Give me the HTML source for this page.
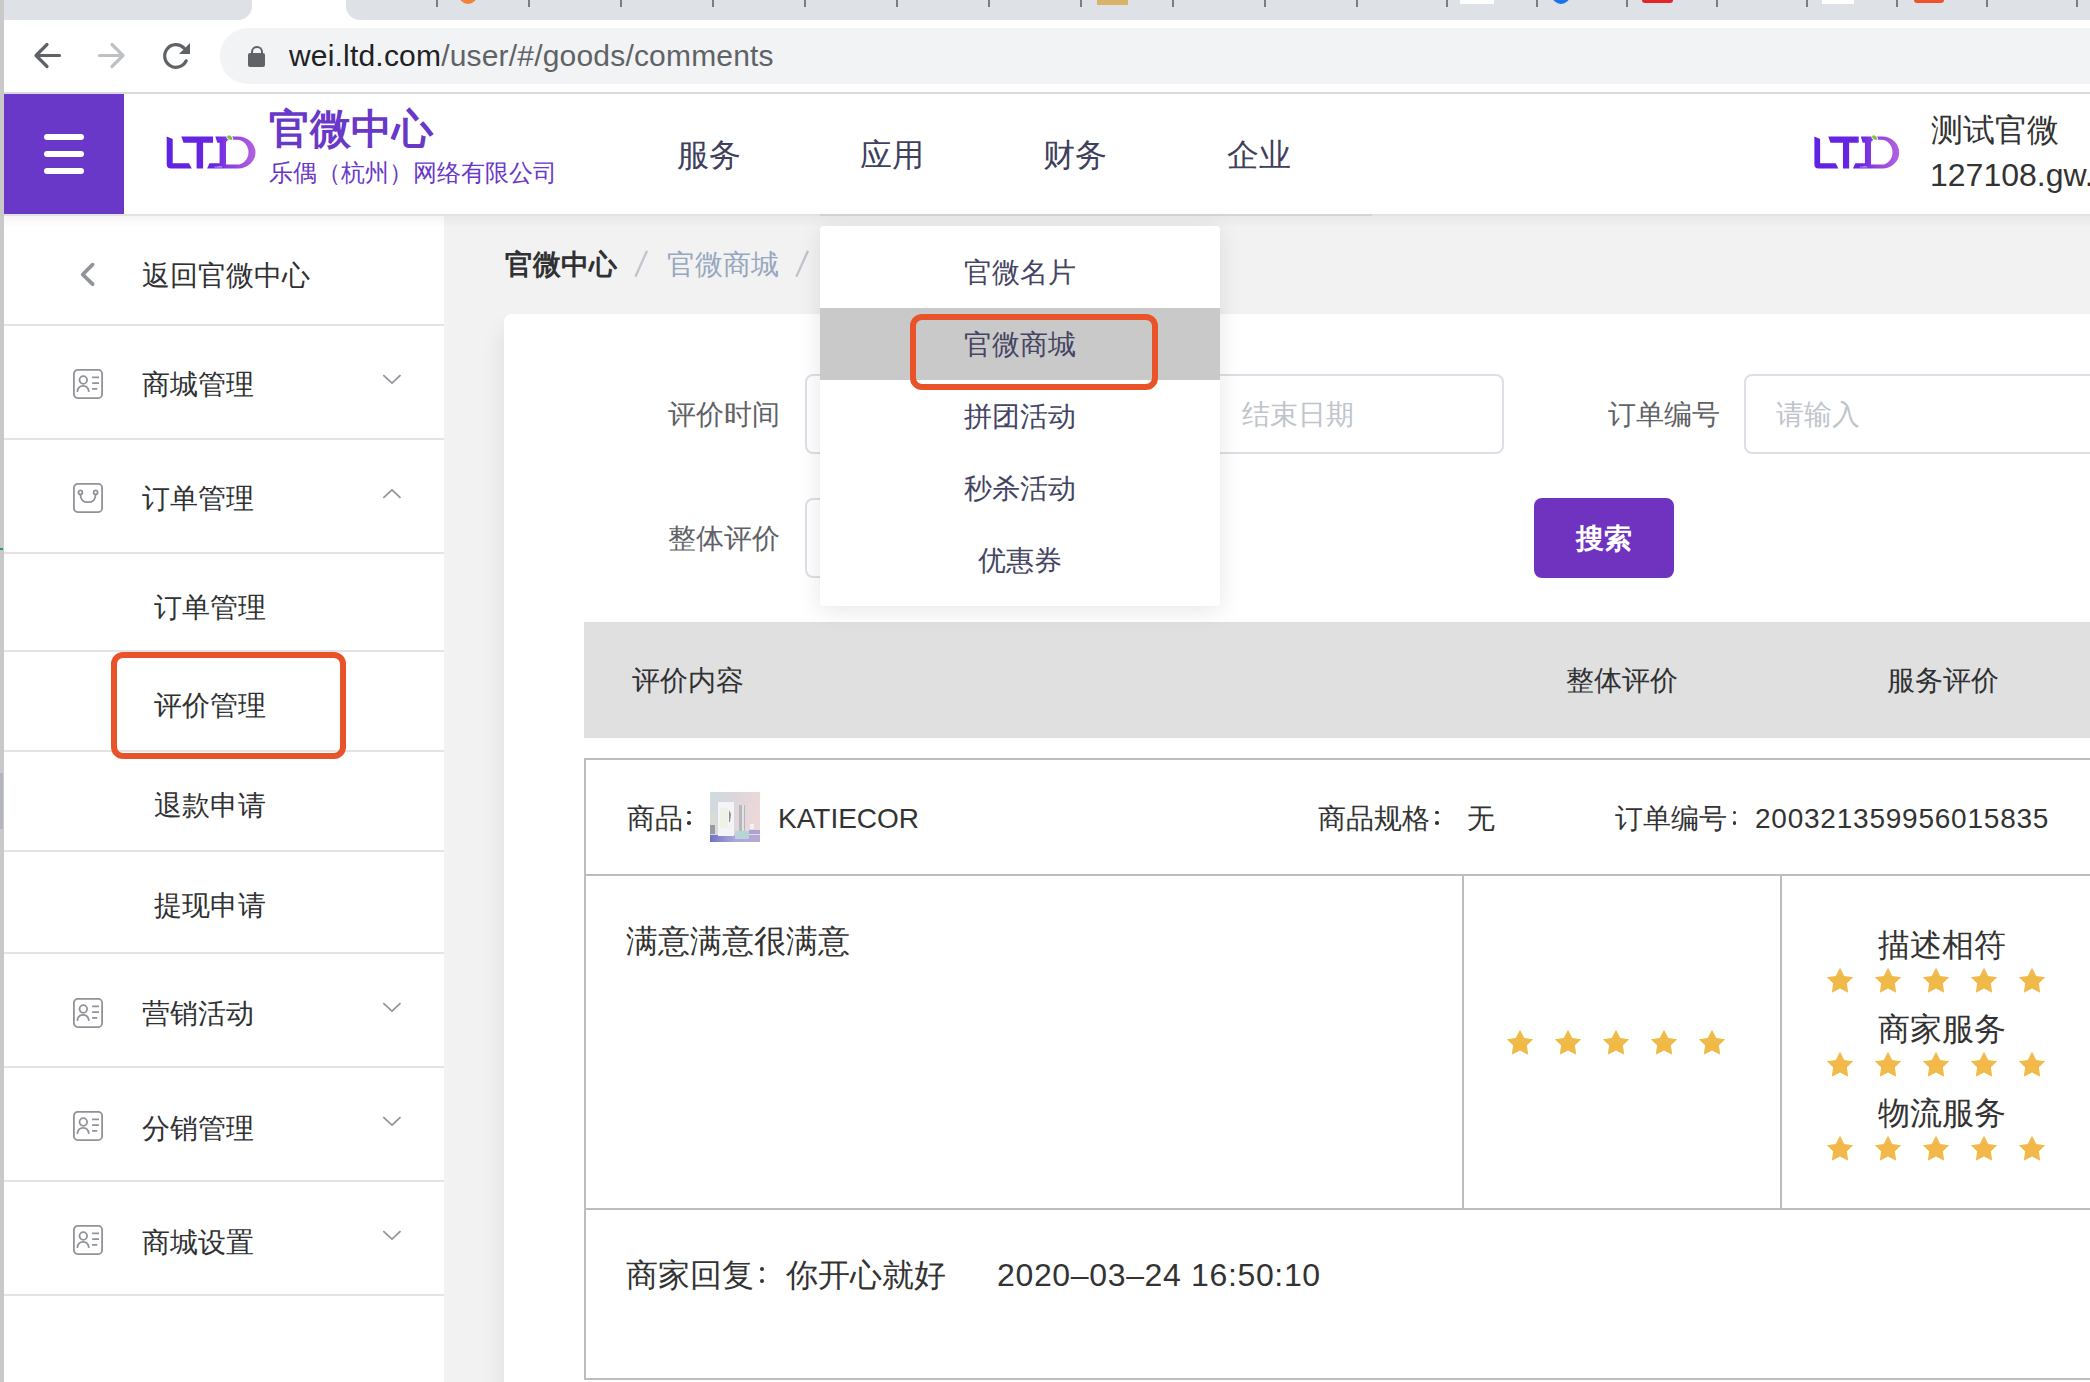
<!DOCTYPE html>
<html><head><meta charset="utf-8">
<style>
*{box-sizing:border-box;margin:0;padding:0}
html,body{width:2090px;height:1382px;overflow:hidden;background:#f2f2f2;font-family:"Liberation Sans",sans-serif;color:#303133}
.a{position:absolute}
.t{position:absolute;white-space:nowrap;line-height:40px}
.sep{position:absolute;top:0;width:2px;height:7px;background:#7a7c80}
.div{position:absolute;left:4px;width:440px;height:2px;background:#e3e3e3}
.ico{position:absolute;left:73px;width:30px;height:30px}
.chev{position:absolute;left:382px;width:20px;height:12px}
.star{position:absolute;width:28px;height:27px}
</style></head><body>

<!-- tab strip -->
<div class="a" style="left:0;top:0;width:2090px;height:20px;background:#dee1e6"></div>
<div class="a" style="left:236px;top:0;width:126px;height:20px;background:#fff"></div>
<div class="a" style="left:220px;top:0;width:32px;height:20px;background:#dee1e6;border-bottom-right-radius:14px"></div>
<div class="a" style="left:346px;top:0;width:32px;height:20px;background:#dee1e6;border-bottom-left-radius:14px"></div>

<!-- toolbar -->
<div class="a" style="left:0;top:20px;width:2090px;height:72px;background:#fff"></div>
<div class="a" style="left:0;top:92px;width:2090px;height:2px;background:#d9dadd"></div>
<div class="a" style="left:220px;top:28px;width:1900px;height:56px;border-radius:28px;background:#f1f3f4"></div>


<!-- tab separators / favicons -->
<div class="sep" style="left:436px"></div><div class="sep" style="left:528px"></div><div class="sep" style="left:620px"></div><div class="sep" style="left:712px"></div><div class="sep" style="left:804px"></div><div class="sep" style="left:896px"></div><div class="sep" style="left:988px"></div><div class="sep" style="left:1080px"></div><div class="sep" style="left:1172px"></div><div class="sep" style="left:1264px"></div><div class="sep" style="left:1356px"></div><div class="sep" style="left:1446px"></div><div class="sep" style="left:1536px"></div><div class="sep" style="left:1626px"></div><div class="sep" style="left:1716px"></div><div class="sep" style="left:1806px"></div><div class="sep" style="left:1896px"></div><div class="sep" style="left:1986px"></div><div class="sep" style="left:2076px"></div>
<div class="a" style="left:459px;top:-14px;width:18px;height:18px;border-radius:50%;background:#f0823a"></div>
<div class="a" style="left:1097px;top:0;width:31px;height:5px;background:#d7b46a"></div>
<div class="a" style="left:1460px;top:0;width:34px;height:4px;background:#fff"></div>
<div class="a" style="left:1552px;top:-14px;width:18px;height:18px;border-radius:50%;background:#1a73e8"></div>
<div class="a" style="left:1642px;top:-4px;width:31px;height:7px;border-radius:3px;background:#e3262b"></div>
<div class="a" style="left:1822px;top:0;width:32px;height:4px;background:#fff"></div>
<div class="a" style="left:1914px;top:-4px;width:30px;height:7px;border-radius:3px;background:#f0522a"></div>
<!-- nav icons -->
<svg class="a" style="left:0;top:20px" width="220" height="72" viewBox="0 20 220 72">
<g fill="none" stroke-width="3.2" stroke-linecap="round" stroke-linejoin="round">
<path d="M59.5 55.5H36.5M47 44.5L36 55.5L47 66.5" stroke="#5f6368"/>
<path d="M99.5 55.5H122.5M112 44.5L123 55.5L112 66.5" stroke="#bdc1c6"/>
<path d="M186.2 60.8A11.3 11.3 0 1 1 184 48" stroke="#5f6368"/>
</g>
<path d="M190 43V54H179Z" fill="#5f6368"/>
</svg>
<!-- lock -->
<div class="a" style="left:251px;top:46px;width:12px;height:14px;border:2.6px solid #5f6368;border-bottom:none;border-radius:7px 7px 0 0"></div>
<div class="a" style="left:248px;top:53px;width:17px;height:14px;border-radius:2px;background:#5f6368"></div>
<div class="t" style="left:289px;top:36px;font-size:30px;color:#202124;letter-spacing:0.19px">wei.ltd.com<span style="color:#5f6368">/user/#/goods/comments</span></div>

<!-- app header -->
<div class="a" style="left:0;top:94px;width:2090px;height:120px;background:#fff"></div>
<div class="a" style="left:4px;top:94px;width:120px;height:120px;background:#6a38c8"></div>


<!-- hamburger -->
<div class="a" style="left:44px;top:134px;width:40px;height:6px;border-radius:3px;background:#fff"></div>
<div class="a" style="left:44px;top:151px;width:40px;height:6px;border-radius:3px;background:#fff"></div>
<div class="a" style="left:44px;top:168px;width:40px;height:6px;border-radius:3px;background:#fff"></div>
<!-- logo -->
<svg class="a" style="left:160px;top:125px" width="100" height="50" viewBox="0 0 100 50"><defs><linearGradient id="lg" gradientUnits="userSpaceOnUse" x1="6" x2="96" y1="0" y2="0"><stop offset="0" stop-color="#5f22e2"/><stop offset="0.55" stop-color="#6a26e0"/><stop offset="0.7" stop-color="#8a3ee0"/><stop offset="1" stop-color="#b562e0"/></linearGradient></defs>
<g fill="url(#lg)" fill-rule="evenodd">
<path d="M6.7 11.5L12.7 14V38.3H29L31.8 43.5H11Q6.7 43.5 6.7 39Z"/>
<path d="M21.3 11.5H53.1V17.7H43.1V43.5H36.6V17.7H23.5Z"/>
<path d="M55.3 11.5H78A17.5 16 0 0 1 95.5 27.5A17.5 16 0 0 1 78 43.5H47.1L49.5 38.3H59.6V17.7H57.3ZM66 18Q66 14.8 71 14.8H77A11.5 12.35 0 0 1 88.5 27.15A11.5 12.35 0 0 1 77 39.5H66Z"/>
</g>
<ellipse cx="69.8" cy="12.8" rx="3.7" ry="2.4" transform="rotate(35 69.8 12.8)" fill="#fff"/><ellipse cx="69.8" cy="12.6" rx="3" ry="1.8" transform="rotate(35 69.8 12.6)" fill="#7cc242"/><text x="54.5" y="42.6" font-size="4" fill="#fff" opacity="0.7" font-family="Liberation Sans">com</text></svg>
<div class="t" style="left:269px;top:109px;font-size:41px;line-height:41px;font-weight:bold;color:#6a38c8">官微中心</div>
<div class="t" style="left:269px;top:161px;font-size:24px;line-height:24px;color:#6a38c8">乐偶（杭州）网络有限公司</div>
<!-- nav -->
<div class="t" style="left:677px;top:135px;font-size:32px;line-height:40px;color:#3f3f5e">服务</div>
<div class="t" style="left:860px;top:135px;font-size:32px;line-height:40px;color:#3f3f5e">应用</div>
<div class="t" style="left:1043px;top:135px;font-size:32px;line-height:40px;color:#3f3f5e">财务</div>
<div class="t" style="left:1227px;top:135px;font-size:32px;line-height:40px;color:#3f3f5e">企业</div>
<!-- user -->
<svg class="a" style="left:1808px;top:125px;transform:scaleX(0.955);transform-origin:0 0" width="100" height="50" viewBox="0 0 100 50"><defs><linearGradient id="lg2" gradientUnits="userSpaceOnUse" x1="6" x2="96" y1="0" y2="0"><stop offset="0" stop-color="#5f22e2"/><stop offset="0.55" stop-color="#6a26e0"/><stop offset="0.7" stop-color="#8a3ee0"/><stop offset="1" stop-color="#b562e0"/></linearGradient></defs>
<g fill="url(#lg2)" fill-rule="evenodd">
<path d="M6.7 11.5L12.7 14V38.3H29L31.8 43.5H11Q6.7 43.5 6.7 39Z"/>
<path d="M21.3 11.5H53.1V17.7H43.1V43.5H36.6V17.7H23.5Z"/>
<path d="M55.3 11.5H78A17.5 16 0 0 1 95.5 27.5A17.5 16 0 0 1 78 43.5H47.1L49.5 38.3H59.6V17.7H57.3ZM66 18Q66 14.8 71 14.8H77A11.5 12.35 0 0 1 88.5 27.15A11.5 12.35 0 0 1 77 39.5H66Z"/>
</g>
<ellipse cx="69.8" cy="12.8" rx="3.7" ry="2.4" transform="rotate(35 69.8 12.8)" fill="#fff"/><ellipse cx="69.8" cy="12.6" rx="3" ry="1.8" transform="rotate(35 69.8 12.6)" fill="#7cc242"/><text x="54.5" y="42.6" font-size="4" fill="#fff" opacity="0.7" font-family="Liberation Sans">com</text></svg>
<div class="t" style="left:1931px;top:110px;font-size:32px;line-height:40px;color:#333">测试官微</div>
<div class="t" style="left:1930px;top:155px;font-size:32px;line-height:40px;color:#333">127108.gw.ltd.com</div>

<!-- sidebar -->
<div class="a" style="left:4px;top:214px;width:440px;height:1168px;background:#fff"></div>

<div class="div" style="top:324px"></div>
<div class="div" style="top:438px"></div>
<div class="div" style="top:552px"></div>
<div class="div" style="top:650px"></div>
<div class="div" style="top:750px"></div>
<div class="div" style="top:850px"></div>
<div class="div" style="top:952px"></div>
<div class="div" style="top:1066px"></div>
<div class="div" style="top:1180px"></div>
<div class="div" style="top:1294px"></div>
<svg class="a" style="left:76px;top:258px" width="24" height="34" viewBox="0 0 24 34"><path d="M16.6 6.7L6.7 16.5L16.6 26.2" fill="none" stroke="#909399" stroke-width="3.8" stroke-linecap="round" stroke-linejoin="round"/></svg>
<div class="t" style="left:142px;top:256px;font-size:28px;color:#303133;">返回官微中心</div>
<svg class="a" style="left:73px;top:369px" width="30" height="30" viewBox="0 0 30 30"><g fill="none" stroke="#909399" stroke-width="1.8"><rect x="0.9" y="0.9" width="28.2" height="28.2" rx="3.8"/><circle cx="10.3" cy="11" r="3.8"/><path d="M4.3 22.8Q5 16.8 10.1 16.8Q15.2 16.8 15.9 22.8"/><path d="M19.1 8.3H26M19.1 14.1H26M19.1 19.9H24.2" stroke-width="1.7"/></g></svg>
<div class="t" style="left:142px;top:365px;font-size:28px;color:#303133;">商城管理</div>
<svg class="a" style="left:380px;top:374px" width="24" height="14" viewBox="0 0 24 14"><path d="M3.3 1.2L12 9.2L20.5 1.2" fill="none" stroke="#909399" stroke-width="1.7"/></svg>
<svg class="a" style="left:73px;top:483px" width="30" height="30" viewBox="0 0 30 30"><g fill="none" stroke="#909399" stroke-width="1.8"><rect x="0.9" y="0.9" width="28.2" height="28.2" rx="3.8"/><circle cx="7.4" cy="9.4" r="2"/><circle cx="22.6" cy="9.4" r="2"/><path d="M7.4 11.4Q7.6 19.2 15 19.2Q22.4 19.2 22.6 11.4"/></g></svg>
<div class="t" style="left:142px;top:479px;font-size:28px;color:#303133;">订单管理</div>
<svg class="a" style="left:380px;top:488px" width="24" height="14" viewBox="0 0 24 14"><path d="M3.3 9.8L12 1.8L20.5 9.8" fill="none" stroke="#909399" stroke-width="1.7"/></svg>
<svg class="a" style="left:73px;top:998px" width="30" height="30" viewBox="0 0 30 30"><g fill="none" stroke="#909399" stroke-width="1.8"><rect x="0.9" y="0.9" width="28.2" height="28.2" rx="3.8"/><circle cx="10.3" cy="11" r="3.8"/><path d="M4.3 22.8Q5 16.8 10.1 16.8Q15.2 16.8 15.9 22.8"/><path d="M19.1 8.3H26M19.1 14.1H26M19.1 19.9H24.2" stroke-width="1.7"/></g></svg>
<div class="t" style="left:142px;top:994px;font-size:28px;color:#303133;">营销活动</div>
<svg class="a" style="left:380px;top:1002px" width="24" height="14" viewBox="0 0 24 14"><path d="M3.3 1.2L12 9.2L20.5 1.2" fill="none" stroke="#909399" stroke-width="1.7"/></svg>
<svg class="a" style="left:73px;top:1111px" width="30" height="30" viewBox="0 0 30 30"><g fill="none" stroke="#909399" stroke-width="1.8"><rect x="0.9" y="0.9" width="28.2" height="28.2" rx="3.8"/><circle cx="10.3" cy="11" r="3.8"/><path d="M4.3 22.8Q5 16.8 10.1 16.8Q15.2 16.8 15.9 22.8"/><path d="M19.1 8.3H26M19.1 14.1H26M19.1 19.9H24.2" stroke-width="1.7"/></g></svg>
<div class="t" style="left:142px;top:1109px;font-size:28px;color:#303133;">分销管理</div>
<svg class="a" style="left:380px;top:1116px" width="24" height="14" viewBox="0 0 24 14"><path d="M3.3 1.2L12 9.2L20.5 1.2" fill="none" stroke="#909399" stroke-width="1.7"/></svg>
<svg class="a" style="left:73px;top:1225px" width="30" height="30" viewBox="0 0 30 30"><g fill="none" stroke="#909399" stroke-width="1.8"><rect x="0.9" y="0.9" width="28.2" height="28.2" rx="3.8"/><circle cx="10.3" cy="11" r="3.8"/><path d="M4.3 22.8Q5 16.8 10.1 16.8Q15.2 16.8 15.9 22.8"/><path d="M19.1 8.3H26M19.1 14.1H26M19.1 19.9H24.2" stroke-width="1.7"/></g></svg>
<div class="t" style="left:142px;top:1223px;font-size:28px;color:#303133;">商城设置</div>
<svg class="a" style="left:380px;top:1230px" width="24" height="14" viewBox="0 0 24 14"><path d="M3.3 1.2L12 9.2L20.5 1.2" fill="none" stroke="#909399" stroke-width="1.7"/></svg>
<div class="t" style="left:154px;top:588px;font-size:28px;color:#303133;">订单管理</div>
<div class="t" style="left:154px;top:686px;font-size:28px;color:#303133;">评价管理</div>
<div class="t" style="left:154px;top:786px;font-size:28px;color:#303133;">退款申请</div>
<div class="t" style="left:154px;top:886px;font-size:28px;color:#303133;">提现申请</div>
<div class="a" style="left:110.5px;top:652px;width:235px;height:106.5px;border:6px solid #e8532a;border-radius:12px"></div>
<!-- header bottom line -->
<div class="a" style="left:4px;top:214px;width:2086px;height:2px;background:#e2e2e4"></div>
<div class="a" style="left:820px;top:214px;width:552px;height:2px;background:#d4d4d6"></div>
<div class="a" style="left:4px;top:216px;width:2086px;height:12px;background:linear-gradient(rgba(0,0,0,0.04),rgba(0,0,0,0))"></div>

<!-- left window border -->
<div class="a" style="left:0;top:0;width:4px;height:1382px;background:#c9c9c9"></div>
<div class="a" style="left:0;top:548px;width:3px;height:2px;background:#2a9a6a"></div>
<div class="a" style="left:0;top:773px;width:3px;height:56px;background:#b3b6c0"></div>

<div class="t" style="left:505px;top:245px;font-size:28px;color:#303133;font-weight:bold">官微中心</div>
<svg class="a" style="left:620px;top:240px" width="200" height="50"><path d="M15.4 36.8L27 10.8M176.3 36.8L188 10.8" stroke="#c0c4cc" stroke-width="2.3"/></svg>
<div class="t" style="left:667px;top:245px;font-size:28px;color:#97a8be;">官微商城</div>

<!-- card -->
<div class="a" style="left:504px;top:314px;width:1700px;height:1200px;background:#fff;border-radius:8px;box-shadow:-3px 14px 22px rgba(0,0,0,0.075)"></div>
<div class="t" style="left:668px;top:395px;font-size:28px;color:#606266;">评价时间</div>
<div class="a" style="left:805px;top:374px;width:699px;height:80px;border:2px solid #dcdfe6;border-radius:8px"></div>
<div class="t" style="left:1242px;top:395px;font-size:28px;color:#c0c4cc;">结束日期</div>
<div class="t" style="left:1608px;top:395px;font-size:28px;color:#606266;">订单编号</div>
<div class="a" style="left:1744px;top:374px;width:500px;height:80px;border:2px solid #dcdfe6;border-radius:8px"></div>
<div class="t" style="left:1776px;top:395px;font-size:28px;color:#c0c4cc;">请输入</div>
<div class="t" style="left:668px;top:519px;font-size:28px;color:#606266;">整体评价</div>
<div class="a" style="left:805px;top:498px;width:400px;height:80px;border:2px solid #dcdfe6;border-radius:8px"></div>
<div class="a" style="left:1534px;top:498px;width:140px;height:80px;border-radius:8px;background:#7033bf"></div>
<div class="t" style="left:1576px;top:519px;font-size:28px;color:#fff;font-weight:bold">搜索</div>
<div class="a" style="left:584px;top:622px;width:1506px;height:116px;background:#e0e0e0"></div>
<div class="t" style="left:632px;top:661px;font-size:28px;color:#303133;">评价内容</div>
<div class="t" style="left:1566px;top:661px;font-size:28px;color:#303133;">整体评价</div>
<div class="t" style="left:1887px;top:661px;font-size:28px;color:#303133;">服务评价</div>
<div class="a" style="left:584px;top:758px;width:1600px;height:622px;border:2px solid #bdbdbd"></div>
<div class="a" style="left:584px;top:874px;width:1506px;height:2px;background:#bdbdbd"></div>
<div class="a" style="left:584px;top:1208px;width:1506px;height:2px;background:#bdbdbd"></div>
<div class="a" style="left:1462px;top:876px;width:2px;height:332px;background:#bdbdbd"></div>
<div class="a" style="left:1780px;top:876px;width:2px;height:332px;background:#bdbdbd"></div>
<div class="t" style="left:627px;top:799px;font-size:28px;color:#333;">商品</div><div class="a" style="left:687.0px;top:810.8000000000001px;width:3.6px;height:3.6px;border-radius:50%;background:#333"></div><div class="a" style="left:687.0px;top:821.1px;width:3.6px;height:3.6px;border-radius:50%;background:#333"></div>
<svg class="a" style="left:710px;top:792px" width="50" height="50" viewBox="0 0 50 50">
<defs><linearGradient id="pbg" x1="0" y1="0" x2="1" y2="0.3"><stop offset="0" stop-color="#cddbe2"/><stop offset="0.45" stop-color="#dcd6da"/><stop offset="1" stop-color="#ecd8d8"/></linearGradient>
<linearGradient id="pfl" x1="0" y1="0" x2="1" y2="0"><stop offset="0" stop-color="#6f73c0"/><stop offset="0.5" stop-color="#a9a8dc"/><stop offset="1" stop-color="#b9a8d6"/></linearGradient></defs>
<rect width="50" height="50" fill="url(#pbg)"/>
<rect x="0" y="20" width="7" height="20" fill="#d9dfcf" opacity="0.6"/>
<rect x="0" y="43" width="50" height="7" fill="url(#pfl)"/>
<rect x="0" y="33" width="5" height="9" fill="#9a9aa6"/>
<rect x="8" y="10" width="16" height="34" fill="#f3f4f8"/>
<rect x="10" y="16" width="8" height="20" fill="#eef2e6"/>
<path d="M19 18L21 22L20 30L19 30Z" fill="#9a8a8a"/>
<rect x="29" y="13" width="6" height="27" fill="#b5b7bb"/>
<rect x="32" y="13" width="2" height="27" fill="#dfe3e6"/>
<rect x="25" y="39" width="14" height="8" fill="#b8d4d8"/>
<rect x="40" y="32" width="4" height="5" fill="#f1f1f6"/>
<rect x="39" y="38" width="11" height="4" fill="#aaa2d2"/>
</svg>
<div class="t" style="left:778px;top:799px;font-size:28px;color:#333;">KATIECOR</div>
<div class="t" style="left:1318px;top:799px;font-size:28px;color:#333;">商品规格</div><div class="a" style="left:1435.2px;top:810.6px;width:3.6px;height:3.6px;border-radius:50%;background:#333"></div><div class="a" style="left:1435.2px;top:821.0px;width:3.6px;height:3.6px;border-radius:50%;background:#333"></div>
<div class="t" style="left:1467px;top:799px;font-size:28px;color:#333;">无</div>
<div class="t" style="left:1615px;top:799px;font-size:28px;color:#333;">订单编号</div><div class="a" style="left:1732.7px;top:810.6px;width:3.6px;height:3.6px;border-radius:50%;background:#333"></div><div class="a" style="left:1732.7px;top:821.0px;width:3.6px;height:3.6px;border-radius:50%;background:#333"></div>
<div class="t" style="left:1755px;top:799px;font-size:28px;color:#333;letter-spacing:0.77px">200321359956015835</div>
<div class="t" style="left:626px;top:921px;font-size:32px;color:#333;">满意满意很满意</div>
<div class="t" style="left:626px;top:1255px;font-size:32px;color:#333;">商家回复</div><div class="a" style="left:759.7px;top:1267px;width:4px;height:4px;border-radius:50%;background:#333"></div><div class="a" style="left:759.7px;top:1278.6px;width:4px;height:4px;border-radius:50%;background:#333"></div><div class="t" style="left:786px;top:1255px;font-size:32px;color:#333;">你开心就好</div>
<div class="t" style="left:997px;top:1255px;font-size:32px;color:#333;letter-spacing:0.65px">2020–03–24 16:50:10</div>
<svg class="a" style="left:1506px;top:1028px" width="28" height="28" viewBox="0 0 28 28"><path d="M14 1.8L18.2 10L27.2 11.3L20.9 17.3L22.2 26.8L14 22.6L5.8 26.8L7.1 17.3L0.8 11.3L9.8 10Z" fill="#f0b94a"/></svg>
<svg class="a" style="left:1554px;top:1028px" width="28" height="28" viewBox="0 0 28 28"><path d="M14 1.8L18.2 10L27.2 11.3L20.9 17.3L22.2 26.8L14 22.6L5.8 26.8L7.1 17.3L0.8 11.3L9.8 10Z" fill="#f0b94a"/></svg>
<svg class="a" style="left:1602px;top:1028px" width="28" height="28" viewBox="0 0 28 28"><path d="M14 1.8L18.2 10L27.2 11.3L20.9 17.3L22.2 26.8L14 22.6L5.8 26.8L7.1 17.3L0.8 11.3L9.8 10Z" fill="#f0b94a"/></svg>
<svg class="a" style="left:1650px;top:1028px" width="28" height="28" viewBox="0 0 28 28"><path d="M14 1.8L18.2 10L27.2 11.3L20.9 17.3L22.2 26.8L14 22.6L5.8 26.8L7.1 17.3L0.8 11.3L9.8 10Z" fill="#f0b94a"/></svg>
<svg class="a" style="left:1698px;top:1028px" width="28" height="28" viewBox="0 0 28 28"><path d="M14 1.8L18.2 10L27.2 11.3L20.9 17.3L22.2 26.8L14 22.6L5.8 26.8L7.1 17.3L0.8 11.3L9.8 10Z" fill="#f0b94a"/></svg>
<div class="t" style="left:1878px;top:925px;font-size:32px;color:#333;">描述相符</div>
<div class="t" style="left:1878px;top:1009px;font-size:32px;color:#333;">商家服务</div>
<div class="t" style="left:1878px;top:1093px;font-size:32px;color:#333;">物流服务</div>
<svg class="a" style="left:1826px;top:966px" width="28" height="28" viewBox="0 0 28 28"><path d="M14 1.8L18.2 10L27.2 11.3L20.9 17.3L22.2 26.8L14 22.6L5.8 26.8L7.1 17.3L0.8 11.3L9.8 10Z" fill="#f0b94a"/></svg>
<svg class="a" style="left:1874px;top:966px" width="28" height="28" viewBox="0 0 28 28"><path d="M14 1.8L18.2 10L27.2 11.3L20.9 17.3L22.2 26.8L14 22.6L5.8 26.8L7.1 17.3L0.8 11.3L9.8 10Z" fill="#f0b94a"/></svg>
<svg class="a" style="left:1922px;top:966px" width="28" height="28" viewBox="0 0 28 28"><path d="M14 1.8L18.2 10L27.2 11.3L20.9 17.3L22.2 26.8L14 22.6L5.8 26.8L7.1 17.3L0.8 11.3L9.8 10Z" fill="#f0b94a"/></svg>
<svg class="a" style="left:1970px;top:966px" width="28" height="28" viewBox="0 0 28 28"><path d="M14 1.8L18.2 10L27.2 11.3L20.9 17.3L22.2 26.8L14 22.6L5.8 26.8L7.1 17.3L0.8 11.3L9.8 10Z" fill="#f0b94a"/></svg>
<svg class="a" style="left:2018px;top:966px" width="28" height="28" viewBox="0 0 28 28"><path d="M14 1.8L18.2 10L27.2 11.3L20.9 17.3L22.2 26.8L14 22.6L5.8 26.8L7.1 17.3L0.8 11.3L9.8 10Z" fill="#f0b94a"/></svg>
<svg class="a" style="left:1826px;top:1050px" width="28" height="28" viewBox="0 0 28 28"><path d="M14 1.8L18.2 10L27.2 11.3L20.9 17.3L22.2 26.8L14 22.6L5.8 26.8L7.1 17.3L0.8 11.3L9.8 10Z" fill="#f0b94a"/></svg>
<svg class="a" style="left:1874px;top:1050px" width="28" height="28" viewBox="0 0 28 28"><path d="M14 1.8L18.2 10L27.2 11.3L20.9 17.3L22.2 26.8L14 22.6L5.8 26.8L7.1 17.3L0.8 11.3L9.8 10Z" fill="#f0b94a"/></svg>
<svg class="a" style="left:1922px;top:1050px" width="28" height="28" viewBox="0 0 28 28"><path d="M14 1.8L18.2 10L27.2 11.3L20.9 17.3L22.2 26.8L14 22.6L5.8 26.8L7.1 17.3L0.8 11.3L9.8 10Z" fill="#f0b94a"/></svg>
<svg class="a" style="left:1970px;top:1050px" width="28" height="28" viewBox="0 0 28 28"><path d="M14 1.8L18.2 10L27.2 11.3L20.9 17.3L22.2 26.8L14 22.6L5.8 26.8L7.1 17.3L0.8 11.3L9.8 10Z" fill="#f0b94a"/></svg>
<svg class="a" style="left:2018px;top:1050px" width="28" height="28" viewBox="0 0 28 28"><path d="M14 1.8L18.2 10L27.2 11.3L20.9 17.3L22.2 26.8L14 22.6L5.8 26.8L7.1 17.3L0.8 11.3L9.8 10Z" fill="#f0b94a"/></svg>
<svg class="a" style="left:1826px;top:1134px" width="28" height="28" viewBox="0 0 28 28"><path d="M14 1.8L18.2 10L27.2 11.3L20.9 17.3L22.2 26.8L14 22.6L5.8 26.8L7.1 17.3L0.8 11.3L9.8 10Z" fill="#f0b94a"/></svg>
<svg class="a" style="left:1874px;top:1134px" width="28" height="28" viewBox="0 0 28 28"><path d="M14 1.8L18.2 10L27.2 11.3L20.9 17.3L22.2 26.8L14 22.6L5.8 26.8L7.1 17.3L0.8 11.3L9.8 10Z" fill="#f0b94a"/></svg>
<svg class="a" style="left:1922px;top:1134px" width="28" height="28" viewBox="0 0 28 28"><path d="M14 1.8L18.2 10L27.2 11.3L20.9 17.3L22.2 26.8L14 22.6L5.8 26.8L7.1 17.3L0.8 11.3L9.8 10Z" fill="#f0b94a"/></svg>
<svg class="a" style="left:1970px;top:1134px" width="28" height="28" viewBox="0 0 28 28"><path d="M14 1.8L18.2 10L27.2 11.3L20.9 17.3L22.2 26.8L14 22.6L5.8 26.8L7.1 17.3L0.8 11.3L9.8 10Z" fill="#f0b94a"/></svg>
<svg class="a" style="left:2018px;top:1134px" width="28" height="28" viewBox="0 0 28 28"><path d="M14 1.8L18.2 10L27.2 11.3L20.9 17.3L22.2 26.8L14 22.6L5.8 26.8L7.1 17.3L0.8 11.3L9.8 10Z" fill="#f0b94a"/></svg>
<div class="a" style="left:820px;top:226px;width:400px;height:380px;background:#fff;border-radius:4px;box-shadow:0 4px 24px rgba(0,0,0,0.10)"></div>
<div class="a" style="left:820px;top:308px;width:400px;height:72px;background:#c9c9c9"></div>
<div class="t" style="left:820px;width:400px;text-align:center;top:253px;font-size:28px;color:#454563">官微名片</div>
<div class="t" style="left:820px;width:400px;text-align:center;top:325px;font-size:28px;color:#454563">官微商城</div>
<div class="t" style="left:820px;width:400px;text-align:center;top:397px;font-size:28px;color:#454563">拼团活动</div>
<div class="t" style="left:820px;width:400px;text-align:center;top:469px;font-size:28px;color:#454563">秒杀活动</div>
<div class="t" style="left:820px;width:400px;text-align:center;top:541px;font-size:28px;color:#454563">优惠券</div>
<div class="a" style="left:910px;top:314px;width:248px;height:76px;border:6px solid #e8532a;border-radius:12px"></div>

</body></html>
